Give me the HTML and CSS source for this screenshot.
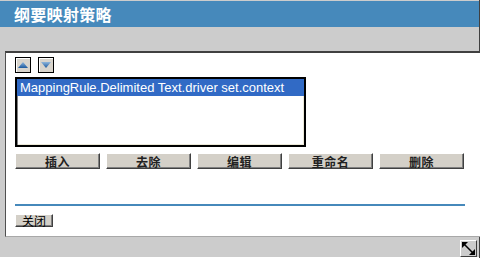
FILE: index.html
```html
<!DOCTYPE html>
<html lang="zh">
<head>
<meta charset="utf-8">
<link rel="stylesheet" href="styles.css">
</head>
<body>
<div class="window">
  <div class="titlebar">纲要映射策略</div>
  <div class="content">
    <div class="panel">
      <div class="arrows">
        <button class="arrow" type="button" aria-label="up">
          <svg width="10" height="6" viewBox="0 0 10 6"><defs><linearGradient id="gu" x1="0" y1="0" x2="0" y2="1"><stop offset="0" stop-color="#8fb6dc"/><stop offset="1" stop-color="#1d5a9e"/></linearGradient></defs><polygon points="5,0 10,6 0,6" fill="url(#gu)"/></svg>
        </button>
        <button class="arrow" type="button" aria-label="down">
          <svg width="10" height="6" viewBox="0 0 10 6"><defs><linearGradient id="gd" x1="0" y1="0" x2="0" y2="1"><stop offset="0" stop-color="#8fb6dc"/><stop offset="1" stop-color="#1d5a9e"/></linearGradient></defs><polygon points="0,0 10,0 5,6" fill="url(#gd)"/></svg>
        </button>
      </div>
      <div class="listbox">
        <div class="item selected">MappingRule.Delimited Text.driver set.context</div>
      </div>
      <div class="actions">
        <button class="btn" type="button">插入</button>
        <button class="btn" type="button">去除</button>
        <button class="btn" type="button">编辑</button>
        <button class="btn" type="button">重命名</button>
        <button class="btn" type="button">删除</button>
      </div>
      <div class="rule"></div>
      <button class="btn close" type="button">关闭</button>
    </div>
    <div class="footer">
      <div class="resize">
        <svg width="15" height="15" viewBox="0 0 15 15"><line x1="3" y1="3" x2="12" y2="12" stroke="#000" stroke-width="1.5"/><polygon points="1,1 7,1 1,7" fill="#000"/><polygon points="14,14 8,14 14,8" fill="#000"/></svg>
      </div>
    </div>
  </div>
  <div class="bottomedge"></div>
</div>
</body>
</html>
```
FILE: styles.css
```css
html, body {
  margin: 0;
  padding: 0;
  background: #cccccc;
}
body {
  width: 480px;
  height: 258px;
  overflow: hidden;
  font-family: "Liberation Sans", "Noto Sans CJK SC", sans-serif;
}
.window {
  width: 479px;
  height: 258px;
  border-right: 1px solid #404040;
  display: flex;
  flex-direction: column;
}
.titlebar {
  margin-top: 1px;
  height: 26px;
  background: #4689bb;
  color: #ffffff;
  font-family: "Noto Sans CJK SC", sans-serif;
  font-weight: 700;
  font-size: 16px;
  line-height: 27px;
  padding-left: 14px;
  letter-spacing: 0.3px;
}
.content {
  flex: 1;
  padding: 24px 0 0 5px;
  display: flex;
  flex-direction: column;
}
.panel {
  width: 465px;
  height: 179px;
  background: #ffffff;
  border-top: 2px solid #404040;
  border-left: 1px solid #505050;
  border-right: 2px solid #a8a8a8;
  border-bottom: 1px solid #a8a8a8;
  padding: 4px 0 0 9px;
  display: flex;
  flex-direction: column;
  align-items: flex-start;
}
.arrows {
  display: flex;
  gap: 7px;
}
.arrow {
  width: 16px;
  height: 16px;
  padding: 0;
  margin: 0;
  border: 1px solid #000;
  background: #d8d4cc;
  box-shadow: inset 1px 1px #ffffff;
  display: flex;
  align-items: center;
  justify-content: center;
}
.listbox {
  margin-top: 4px;
  width: 287px;
  height: 66px;
  border: 2px solid #000;
  box-shadow: inset 1px 1px #808080, inset -1px -1px #ece9d8;
  background: #fff;
  padding: 0;
}
.item {
  height: 17px;
  line-height: 17px;
  font-size: 13px;
  padding-left: 3px;
  margin: 0;
  white-space: nowrap;
}
.item.selected {
  background: #316ac5;
  color: #fff;
}
.actions {
  margin-top: 6px;
  display: flex;
  gap: 6px;
}
.btn {
  width: 85px;
  height: 16px;
  padding: 0;
  margin: 0;
  background: #d4d0c8;
  border: 1px solid;
  border-color: #ffffff #404040 #404040 #ffffff;
  box-shadow: inset -1px -1px #808080;
  font-family: "Noto Sans CJK SC", sans-serif;
  font-size: 12px;
  font-weight: 700;
  line-height: 13px;
  letter-spacing: 0.5px;
  color: #222;
}
.rule {
  margin-top: 35px;
  width: 450px;
  height: 2px;
  background: #4689bb;
}
.close {
  margin-top: 8px;
  width: 38px;
  height: 13px;
  font-weight: 400;
  line-height: 11px;
  letter-spacing: 0;
  color: #000;
}
.footer {
  flex: 1;
  display: flex;
  justify-content: flex-end;
  align-items: flex-start;
  padding: 3px 2px 0 0;
}
.resize {
  width: 15px;
  height: 15px;
  border: 1px solid;
  border-color: #ffffff #404040 #404040 #ffffff;
  display: flex;
}
.bottomedge {
  height: 3px;
  background: #404040;
  border-bottom: 1px solid #ffffff;
}
```
